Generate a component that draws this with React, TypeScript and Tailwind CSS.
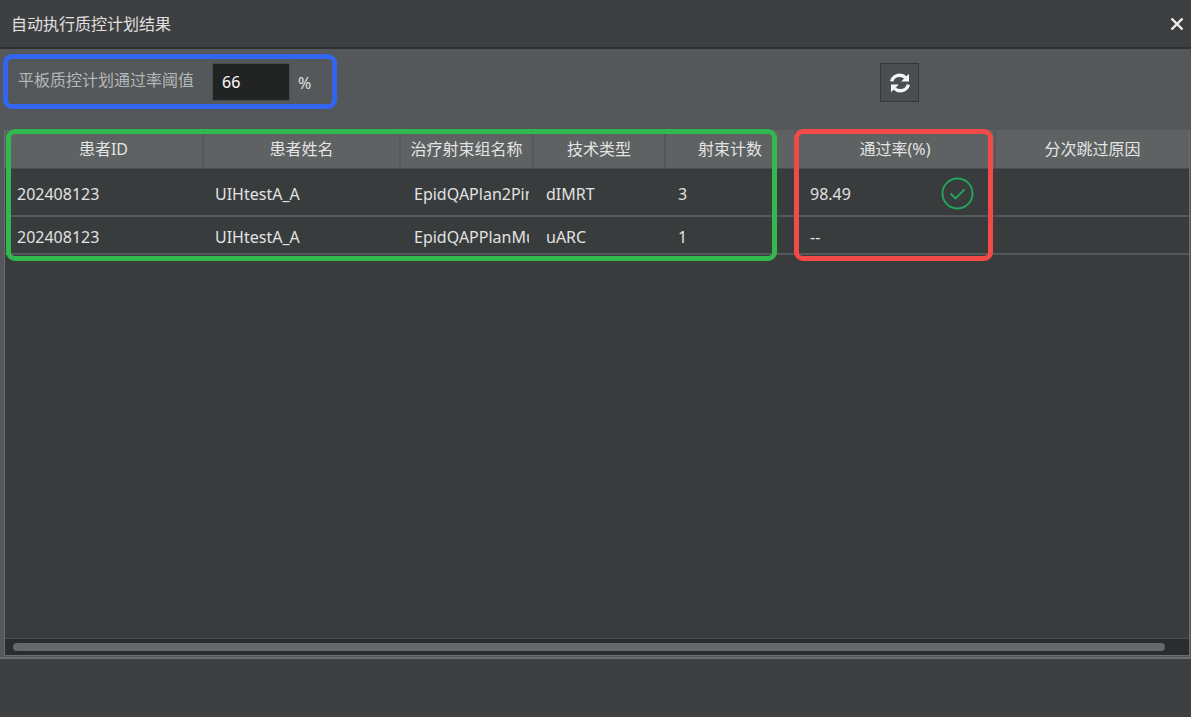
import { useState } from "react";

const FONT = "font-['Noto_Sans','Noto_Sans_CJK_SC',sans-serif]";

// grid columns shared by header and rows
const GRID = "grid grid-cols-[199px_197px_133px_132px_130px_200px_1fr]";

const HEADERS = ["患者ID", "患者姓名", "治疗射束组名称", "技术类型", "射束计数", "通过率(%)", "分次跳过原因"];

const ROWS = [
  { id: "202408123", name: "UIHtestA_A", plan: "EpidQAPlan2PinPoint", tech: "dIMRT", beams: "3", rate: "98.49", ok: true, h: "h-[48px]" },
  { id: "202408123", name: "UIHtestA_A", plan: "EpidQAPPlanMultiLeaf", tech: "uARC", beams: "1", rate: "--", ok: false, h: "h-[38px]" },
];

function RefreshIcon() {
  return (
    <svg width="22" height="22" viewBox="0 0 22 22" fill="none" aria-hidden>
      <path d="M2.6 9.4C3.5 5.6 6.9 3.2 10.8 3.2c2.3 0 4.3.9 5.7 2.4" stroke="#f4f4f4" strokeWidth="3.4" />
      <path d="M20 1.8v7.8h-7.8z" fill="#f4f4f4" />
      <path d="M19.4 12.6c-.9 3.8-4.3 6.2-8.2 6.2-2.3 0-4.3-.9-5.7-2.4" stroke="#f4f4f4" strokeWidth="3.4" />
      <path d="M2 20.2v-7.8h7.8z" fill="#f4f4f4" />
    </svg>
  );
}

function PassIcon() {
  return (
    <svg width="33" height="33" viewBox="0 0 33 33" fill="none" aria-hidden>
      <circle cx="16.5" cy="16.5" r="15" stroke="#22a85c" strokeWidth="1.8" />
      <path d="m9.5 16.5 5 5 9-9" stroke="#22a85c" strokeWidth="1.8" />
    </svg>
  );
}

export default function App() {
  const [threshold, setThreshold] = useState("66");

  return (
    <div className={`relative flex h-[717px] w-[1191px] flex-col overflow-hidden bg-[#3e3f41] ${FONT}`}>
      {/* title bar */}
      <div className="flex h-[47px] shrink-0 items-center justify-between pl-[11px] pr-[7px]">
        <span className="text-[16px] text-[#e0e0e0]">自动执行质控计划结果</span>
        <svg width="14" height="14" viewBox="0 0 14 14" aria-hidden>
          <path d="M1.5 1.5l11 11M12.5 1.5l-11 11" stroke="#f0f0f0" strokeWidth="2.4" />
        </svg>
      </div>

      <div className="flex h-[612px] shrink-0 flex-col border-t-2 border-b-2 border-t-[#2f3031] border-b-[#6a6e70] bg-[#54585a]">
        {/* threshold + refresh */}
        <div className="flex h-[81px] shrink-0 items-start pt-[14px]">
          <span className="ml-[18px] mt-[7px] w-[194px] text-[16px] leading-5 text-[#b4b7b8]">平板质控计划通过率阈值</span>
          <input
            value={threshold}
            onChange={(e) => setThreshold(e.target.value)}
            className="h-[38px] w-[78px] border border-[#4a4c4e] bg-[#222424] pl-[9px] text-[16px] text-white outline-none"
          />
          <span className="ml-[8px] mt-[10px] w-[16px] text-[16px] leading-5 text-[#e0e0e0]">%</span>
          <button className="ml-[566px] flex h-[39px] w-[39px] items-center justify-center border border-[#333536] bg-[#4b4e50]">
            <RefreshIcon />
          </button>
        </div>

        {/* table */}
        <div className="mb-px ml-[4px] mr-px flex min-h-0 flex-1 flex-col border-x border-b border-[#6a6e70] bg-[#393c3d]">
          <div className={`${GRID} h-[39px] shrink-0 border-b border-[#4a4d4f] bg-[#5e6263]`}>
            {HEADERS.map((h) => (
              <div
                key={h}
                className="flex items-center justify-center overflow-hidden whitespace-nowrap border-r-2 border-[#54585a] text-[16px] text-[#e4e4e4] last:border-r-0"
              >
                {h}
              </div>
            ))}
          </div>

          <div className="flex-1">
            {ROWS.map((r, i) => (
              <div key={i} className={`${GRID} ${r.h} items-center border-b-2 border-[#54585a] pt-[3px] text-[16px] text-[#e2e2e2]`}>
                <div className="pl-[12px]">{r.id}</div>
                <div className="pl-[11px]">{r.name}</div>
                <div className="ml-[13px] w-[115px] overflow-hidden whitespace-nowrap">{r.plan}</div>
                <div className="pl-[12px]">{r.tech}</div>
                <div className="pl-[12px]">{r.beams}</div>
                <div className="flex items-center justify-between pl-[14px] pr-[22px]">
                  <span>{r.rate}</span>
                  {r.ok && <PassIcon />}
                </div>
                <div />
              </div>
            ))}
          </div>

          {/* horizontal scrollbar */}
          <div className="flex h-[17px] shrink-0 items-center border-t border-[#4a4d4f] bg-[#2a2c2e] pl-[8px] pr-[24px]">
            <div className="h-[8px] w-full rounded-full bg-[#65696a]" />
          </div>
        </div>
      </div>

      {/* annotation outlines laid over the screenshot */}
      <div className="pointer-events-none absolute left-[3px] top-[54px] h-[55px] w-[334px] rounded-[9px] border-[5px] border-[#3366f0]" />
      <div className="pointer-events-none absolute left-[6px] top-[129px] h-[132px] w-[771px] rounded-[9px] border-[5px] border-[#33b84d]" />
      <div className="pointer-events-none absolute left-[794px] top-[129px] h-[132px] w-[199px] rounded-[9px] border-[5px] border-[#f24a46]" />
    </div>
  );
}
